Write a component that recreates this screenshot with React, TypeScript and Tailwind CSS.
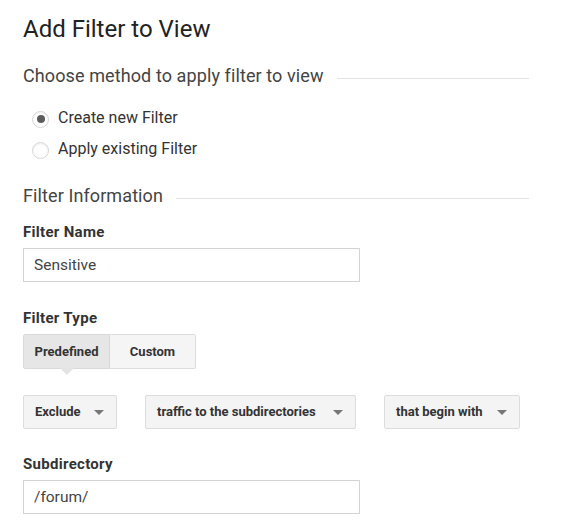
import React from "react"

const font = { fontFamily: "Roboto, 'Noto Sans', sans-serif" }

function SectionHeading({ children }: { children: React.ReactNode }) {
  return (
    <div className="flex items-center gap-[13px]">
      <h2 className="text-[18px] leading-6 tracking-[0.1px] text-[#444] whitespace-nowrap">{children}</h2>
      <div className="flex-1 h-px bg-[#e3e3e3] mt-[4px]" />
    </div>
  )
}

function FieldLabel({ children }: { children: React.ReactNode }) {
  return <div className="text-[15px] leading-5 tracking-[0.3px] font-bold text-[#333]">{children}</div>
}

function Radio({ label, checked }: { label: string; checked?: boolean }) {
  return (
    <label className="flex items-center h-6 pl-[9px] gap-[9px] text-[16px] text-[#333]">
      <span className="w-[17px] h-[17px] rounded-full border border-[#d6d6d6] bg-white shadow-[inset_0_1px_2px_rgba(0,0,0,0.08)] flex items-center justify-center mt-[2px]">
        {checked && <span className="w-[8px] h-[8px] rounded-full bg-[#5c5c5c]" />}
      </span>
      {label}
    </label>
  )
}

function Caret() {
  return (
    <svg width="10" height="5" viewBox="0 0 10 5" className="shrink-0">
      <path d="M0 0h10L5 5z" fill="#777" />
    </svg>
  )
}

function Dropdown({ label, width }: { label: string; width: string }) {
  return (
    <button
      className={`${width} h-[34px] flex items-center justify-between pl-[11px] pr-[12px] bg-[#f4f4f4] border border-[#dcdcdc] rounded-[2px] text-[13px] font-bold text-[#333]`}
    >
      <span>{label}</span>
      <Caret />
    </button>
  )
}

function TextField({ value }: { value: string }) {
  return (
    <input
      readOnly
      value={value}
      className="w-[337px] h-[34px] border border-[#d4d4d4] px-[10px] text-[15.5px] text-[#444] outline-none"
      style={font}
    />
  )
}

export default function App() {
  return (
    <div className="bg-white w-[581px] h-[526px] pl-[23px] pt-[14px]" style={font}>
      <div className="w-[506px]">
        <h1 className="text-[24px] leading-[30px] text-[#222]">Add Filter to View</h1>

        <div className="mt-[20px]">
          <SectionHeading>Choose method to apply filter to view</SectionHeading>
        </div>

        <div className="mt-[18px] flex flex-col gap-[7px]">
          <Radio label="Create new Filter" checked />
          <Radio label="Apply existing Filter" />
        </div>

        <div className="mt-[23px]">
          <SectionHeading>Filter Information</SectionHeading>
        </div>

        <div className="mt-[14px]">
          <FieldLabel>Filter Name</FieldLabel>
        </div>
        <div className="mt-[6px]">
          <TextField value="Sensitive" />
        </div>

        <div className="mt-[26px]">
          <FieldLabel>Filter Type</FieldLabel>
        </div>
        <div className="mt-[6px] flex">
          <div className="relative">
            <button className="w-[87px] h-[35px] bg-[#e6e6e6] border border-[#d9d9d9] rounded-l-[2px] text-[13px] font-bold text-[#333]">
              Predefined
            </button>
            {/* pointer under the active tab */}
            <svg width="14" height="7" viewBox="0 0 14 7" className="absolute left-[37px] top-[34px]">
              <path d="M0 0h14L7 7z" fill="#e3e3e3" />
            </svg>
          </div>
          <button className="w-[86px] h-[35px] bg-[#f5f5f5] border border-l-0 border-[#dcdcdc] rounded-r-[2px] text-[13px] font-bold text-[#333]">
            Custom
          </button>
        </div>

        <div className="mt-[26px] flex gap-[28px]">
          <Dropdown label="Exclude" width="w-[94px]" />
          <Dropdown label="traffic to the subdirectories" width="w-[211px]" />
          <Dropdown label="that begin with" width="w-[136px]" />
        </div>

        <div className="mt-[25px]">
          <FieldLabel>Subdirectory</FieldLabel>
        </div>
        <div className="mt-[6px]">
          <TextField value="/forum/" />
        </div>
      </div>
    </div>
  )
}
